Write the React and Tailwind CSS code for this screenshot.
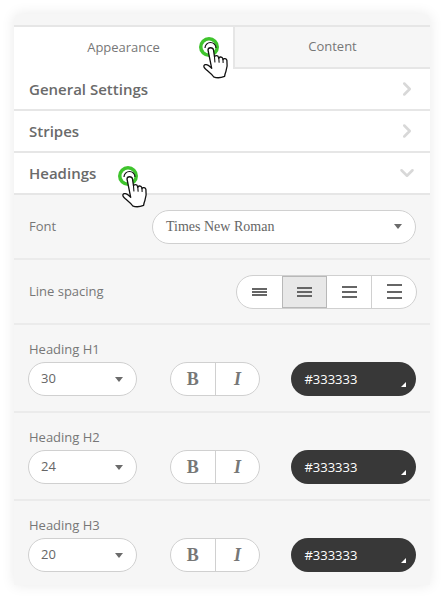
import { ChevronRight, ChevronDown } from 'lucide-react'

const sans = "font-['Open_Sans',sans-serif]"

function Caret() {
  return <span className="h-0 w-0 border-x-4 border-t-[5px] border-x-transparent border-t-[#6b6b6b]" />
}

function Tap({ className }) {
  return (
    <svg className={`absolute z-10 ${className}`} width="40" height="44" viewBox="0 0 40 44" fill="none">
      <circle cx="11" cy="10" r="10" fill="#3fc42d" />
      <circle cx="11" cy="10" r="6.5" fill="#fff" />
      <path d="M7 11a5.500 5.500 0 0 1 11 0" stroke="#111" strokeWidth="1.2" />
      <path
        d="M10 13c0-3 5-3 5.500 0l1 7c.3-2 3.500-2 4 .3l.3 1c.4-1.900 3.500-1.700 4 .4l.2.8c.8-1.600 3.600-1.100 3.900.9.600 4 .2 8-1 11-.8 2-1.200 3.500-1.300 5-3.500 1.400-8.500 1.500-11 .4-1.500-2.600-4.300-4.500-7-6.800-1.800-1.500-3.200-3.300-2.600-4.500.8-1.600 3.600-.8 5.200.6l2.500 2.200z"
        fill="#fff"
        stroke="#111"
        strokeWidth="1.300"
        strokeLinejoin="round"
      />
      <path d="M16.500 20l.4 5M20.800 21.300l.3 4M25 22.500l.1 3" stroke="#111" strokeWidth="1.100" strokeLinecap="round" />
    </svg>
  )
}

function Accordion({ title, open, children }) {
  const Icon = open ? ChevronDown : ChevronRight
  return (
    <div className="relative flex h-[42px] items-center justify-between border-b-2 border-[#e6e6e6] bg-white pl-[15px] pr-[12px]">
      <span className="text-[15px] font-semibold text-[#6a6a6a]">{title}</span>
      <Icon size={22} strokeWidth={2.800} className="text-[#d8d8d8]" />
      {children}
    </div>
  )
}

function Lines({ gap }) {
  return (
    <span className="flex w-[15px] flex-col" style={{ gap }}>
      <span className="h-[2px] bg-[#666]" />
      <span className="h-[2px] bg-[#666]" />
      <span className="h-[2px] bg-[#666]" />
    </span>
  )
}

function HeadingRow({ label, size, last }) {
  return (
    <div className={`flex flex-col px-[14px] pt-[14px] ${last ? 'h-[84px]' : 'h-[88px] border-b-2 border-[#ebebeb]'}`}>
      <div className="h-[23px] pl-px text-[13px] leading-[20px] text-[#777]">{label}</div>
      <div className="flex items-center">
        <div className="flex h-[34px] w-[109px] items-center justify-between rounded-full border border-[#d0d0d0] bg-white pl-[12px] pr-[13px] text-[13px] text-[#666]">
          {size}
          <Caret />
        </div>
        <div className="ml-[33px] flex h-[34px] w-[91px] rounded-full border border-[#d0d0d0] bg-white font-['Liberation_Serif',serif] text-[#777]">
          <span className="flex w-[45px] items-center justify-center border-r border-[#d0d0d0] text-[18px] font-bold">B</span>
          <span className="flex flex-1 items-center justify-center text-[18px] font-bold italic">I</span>
        </div>
        <div className="relative ml-[31px] flex h-[34px] w-[125px] items-center rounded-full bg-[#383838] pl-[13px] pt-[2px] text-[13px] text-white">
          #333333
          <span className="absolute bottom-[9px] right-[10px] h-0 w-0 border-b-[5px] border-l-[5px] border-b-white border-l-transparent" />
        </div>
      </div>
    </div>
  )
}

export default function App() {
  return (
    <div className={`h-[600px] overflow-hidden bg-white pl-[14px] pt-[14px] ${sans}`}>
      <div className="h-[571px] w-[416px] overflow-hidden rounded-t-md bg-[#f6f6f6] pt-[11px] shadow-[0_0_14px_rgba(0,0,0,0.09)]">
        <div className="flex h-[44px] border-t-2 border-[#e6e6e6] text-[13px] text-[#777]">
          <div className="relative flex w-[219px] items-center justify-center bg-white pb-px">
            Appearance
            <Tap className="left-[184px] top-[10px]" />
          </div>
          <div className="flex flex-1 items-center justify-center border-b-2 border-l-2 border-[#e6e6e6] pb-px">Content</div>
        </div>
        <Accordion title="General Settings" />
        <Accordion title="Stripes" />
        <Accordion title="Headings" open>
          <Tap className="left-[103px] top-[13px]" />
        </Accordion>

        <div className="flex h-[65px] items-center justify-between border-b-2 border-[#ebebeb] pl-[15px] pr-[14px]">
          <span className="text-[13px] text-[#777]">Font</span>
          <div className="flex h-[34px] w-[264px] items-center justify-between rounded-full border border-[#d0d0d0] bg-white pl-[13px] pr-[13px] font-['Liberation_Serif',serif] text-[14px] text-[#666]">
            Times New Roman
            <Caret />
          </div>
        </div>

        <div className="flex h-[65px] items-center justify-between border-b-2 border-[#ebebeb] pl-[15px] pr-[13px]">
          <span className="text-[13px] text-[#777]">Line spacing</span>
          <div className="flex h-[34px] w-[181px] overflow-hidden rounded-full border border-[#d0d0d0] bg-white">
            <span className="flex w-[45px] items-center justify-center"><Lines gap="1px" /></span>
            <span className="flex w-[45px] items-center justify-center border border-[#b8b8b8] bg-[#e8e8e8]"><Lines gap="2px" /></span>
            <span className="flex w-[45px] items-center justify-center border-r border-[#d0d0d0]"><Lines gap="3px" /></span>
            <span className="flex flex-1 items-center justify-center"><Lines gap="4.500px" /></span>
          </div>
        </div>

        <HeadingRow label="Heading H1" size="30" />
        <HeadingRow label="Heading H2" size="24" />
        <HeadingRow label="Heading H3" size="20" last />
      </div>
    </div>
  )
}
